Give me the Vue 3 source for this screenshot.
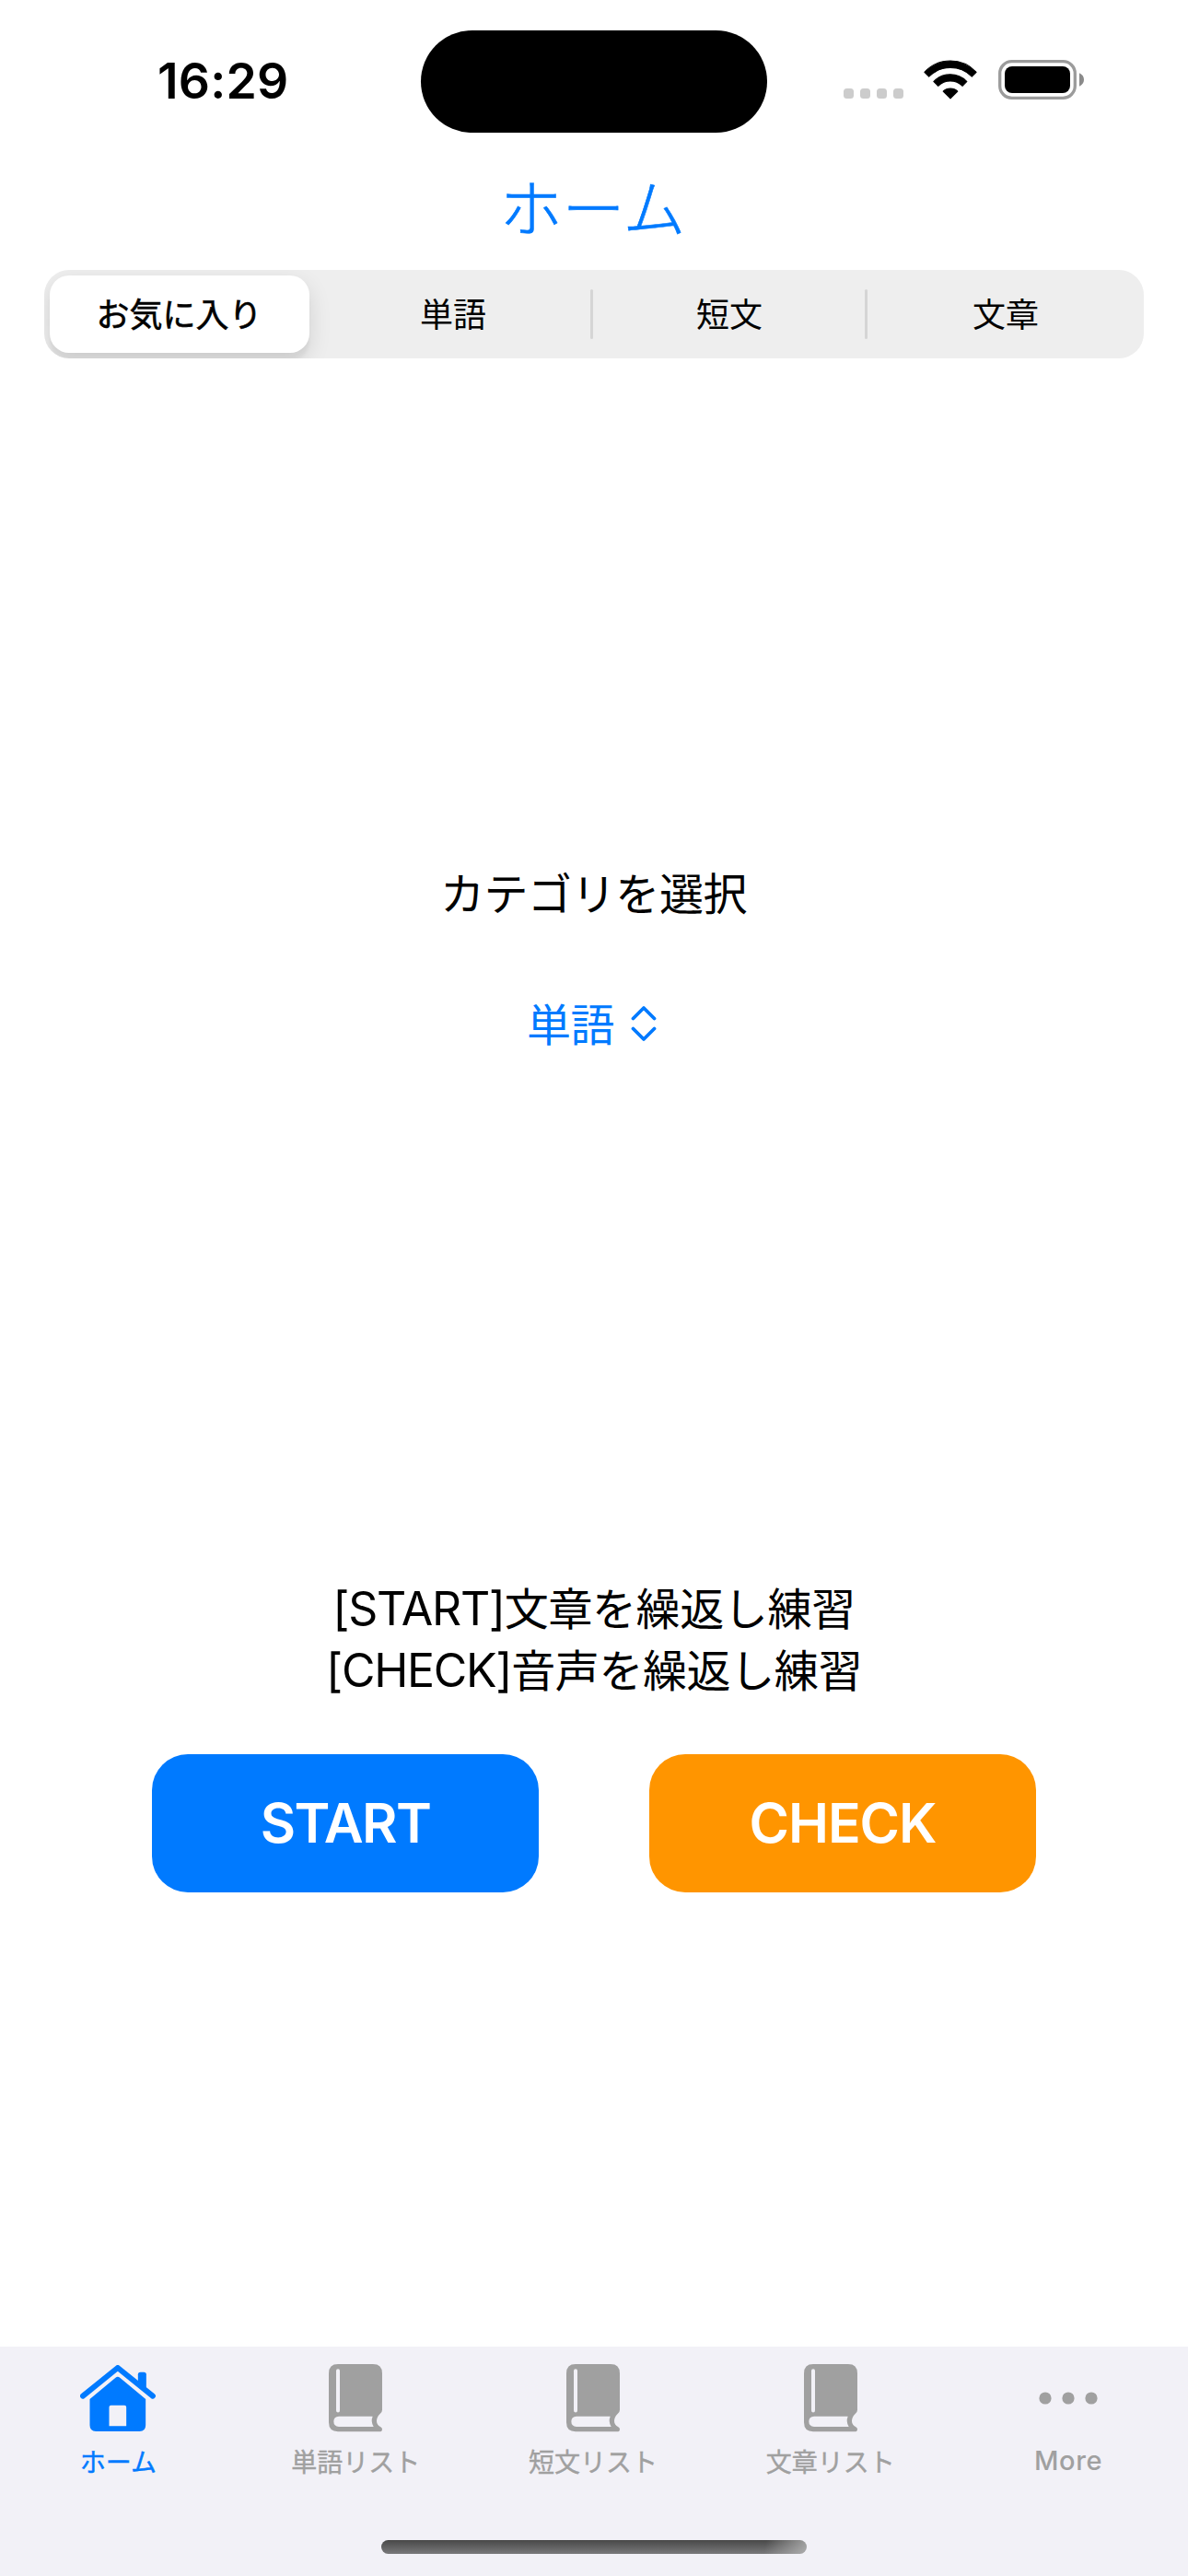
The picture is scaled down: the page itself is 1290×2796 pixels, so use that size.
<script setup>
import { ref } from 'vue'

const segments = ['お気に入り', '単語', '短文', '文章']
const selected = ref(0)
const tabs = [
  { label: 'ホーム', icon: 'home' },
  { label: '単語リスト', icon: 'book' },
  { label: '短文リスト', icon: 'book' },
  { label: '文章リスト', icon: 'book' },
  { label: 'More', icon: 'more' },
]
const activeTab = ref(0)
</script>

<template>
  <div class="screen">
    <header class="status">
      <span class="time">16:29</span>
      <div class="island"></div>
      <div class="indicators">
        <div class="signal"><i v-for="n in 4" :key="n"></i></div>
        <svg class="wifi" viewBox="491 134 173 128">
          <g fill="#000" stroke="#000" stroke-width="3" stroke-linejoin="round">
            <path d="M493.500 173.500A115 115 0 0 1 661.500 173.500L647 188A99 99 0 0 0 508 188Z" />
            <path d="M523 204A75 75 0 0 1 631 204L616.500 218.500A57 57 0 0 0 538 218.500Z" />
            <path d="M554 235.500A34 34 0 0 1 601 235.500L577.500 259Z" />
          </g>
        </svg>
        <svg class="battery" viewBox="0 0 93 43">
          <rect x="1.700" y="1.700" width="81.600" height="39.600" rx="13" fill="none" stroke="#9b9b9b" stroke-width="3.300" />
          <rect x="7" y="7" width="71" height="29" rx="8" fill="#000" />
          <path d="M88 14.300C91.500 16 93 18.500 93 21.500S91.500 27 88 28.700Z" fill="#8a8a8a" />
        </svg>
      </div>
    </header>

    <h1 class="title">ホーム</h1>

    <nav class="segmented">
      <button
        v-for="(name, i) in segments"
        :key="name"
        class="segment"
        :class="{ selected: i === selected }"
        @click="selected = i"
      >{{ name }}</button>
    </nav>

    <main class="content">
      <p class="caption">カテゴリを選択</p>
      <button class="picker">
        <span>単語</span>
        <svg class="chevrons" viewBox="0 0 28 40">
          <path d="M2.500 14.500L14 3L25.500 14.500M2.500 25.500L14 37L25.500 25.500" fill="none" stroke="#007aff" stroke-width="3.800" stroke-linecap="round" stroke-linejoin="round" />
        </svg>
      </button>
      <div class="hints">
        <p><span class="latin">[START]</span>文章を繰返し練習</p>
        <p><span class="latin">[CHECK]</span>音声を繰返し練習</p>
      </div>
      <div class="actions">
        <button class="action start">START</button>
        <button class="action check">CHECK</button>
      </div>
    </main>

    <footer class="tabbar">
      <div class="tabs">
        <button
          v-for="(tab, i) in tabs"
          :key="tab.label"
          class="tab"
          :class="{ active: i === activeTab }"
          @click="activeTab = i"
        >
          <span class="glyph">
            <svg v-if="tab.icon === 'home'" width="82" height="72" viewBox="260.500 141 246 216">
              <path d="M269.500 242L383 150L497 242" fill="none" stroke="currentColor" stroke-width="18" stroke-linecap="round" stroke-linejoin="round" />
              <path d="M449 205V172Q449 164 457 164H468Q476 164 476 172V225Z" fill="currentColor" />
              <path fill="currentColor" fill-rule="evenodd" d="M376 182Q383 176 390 182L474 252V337Q474 357 454 357H312Q292 357 292 337V252ZM361 272Q355 272 355 278V340H411V278Q411 272 405 272Z" />
            </svg>
            <svg v-else-if="tab.icon === 'book'" width="58" height="73.300" viewBox="1071 140 174 220">
              <path fill="currentColor" fill-rule="evenodd" d="M1101 140H1215Q1245 140 1245 170V289Q1245 297 1238 302Q1227 313 1227 325Q1227 337 1240 345Q1245 348 1245 352Q1245 360 1236 360H1101Q1071 360 1071 330V170Q1071 140 1101 140ZM1101 155.500Q1095 155.500 1095 162V291Q1095 297.500 1101 297.500Q1107 297.500 1107 291V162Q1107 155.500 1101 155.500ZM1104 310Q1087 311 1087 327Q1087 343 1104 344H1217Q1207 327 1214 310Z" />
            </svg>
            <svg v-else width="64" height="14" viewBox="0 0 64 14">
              <circle v-for="n in 3" :key="n" :cx="7 + (n - 1) * 25" cy="7" r="6.600" fill="currentColor" />
            </svg>
          </span>
          <span class="label" :class="{ roman: tab.icon === 'more' }">{{ tab.label }}</span>
        </button>
      </div>
      <div class="home-indicator"></div>
    </footer>
  </div>
</template>

<style>
body {
  background: #fff;
}
</style>

<style scoped>
.screen {
  width: 1290px;
  height: 2796px;
  display: flex;
  flex-direction: column;
  background: #fff;
  color: #000;
  overflow: hidden;
  font-family: "Noto Sans CJK JP", sans-serif;
}
button {
  border: 0;
  padding: 0;
  background: none;
  font: inherit;
  color: inherit;
}
p,
h1 {
  margin: 0;
}
.status {
  flex: none;
  height: 178px;
  display: grid;
  grid-template-columns: 457px 376px 1fr;
  align-items: start;
}
.time {
  margin: 56px 0 0 171px;
  font: 600 53.5px/64px Inter, sans-serif;
  letter-spacing: 0.2px;
}
.island {
  margin-top: 33px;
  height: 111px;
  border-radius: 56px;
  background: #000;
}
.indicators {
  display: flex;
  align-items: flex-end;
  margin: 65px 0 0 83px;
}
.signal {
  display: flex;
  gap: 7px;
  margin-bottom: 1px;
}
.signal i {
  width: 11px;
  height: 11px;
  border-radius: 3.5px;
  background: #ccc;
}
.wifi {
  width: 58px;
  height: 43px;
  margin-left: 22px;
}
.battery {
  width: 93px;
  height: 43px;
  margin-left: 23px;
}
.title {
  flex: none;
  padding-right: 3px;
  font-size: 68px;
  line-height: 90px;
  font-weight: 300;
  -webkit-text-stroke: 0.6px #007aff;
  text-align: center;
  color: #007aff;
}
.segmented {
  flex: none;
  display: grid;
  grid-template-columns: 294px repeat(3, 1fr);
  height: 96px;
  margin: 25px 48px 0;
  border-radius: 27px;
  background: #eee;
  overflow: hidden;
}
.segment {
  position: relative;
  padding-bottom: 4px;
  font-size: 36px;
  line-height: 80px;
}
.segment:nth-child(n + 3)::before {
  content: "";
  position: absolute;
  left: -1px;
  top: 21px;
  width: 3px;
  height: 54px;
  border-radius: 2px;
  background: #d5d5d5;
}
.segment:nth-child(4)::before {
  left: -3px;
}
.segment.selected {
  margin: 6px;
  padding-right: 1px;
  border-radius: 21px;
  background: #fff;
  -webkit-text-stroke: 0.6px #000;
  box-shadow: 0 9px 24px rgba(0, 0, 0, 0.12), 0 9px 3px rgba(0, 0, 0, 0.04);
}
.content {
  flex: 1;
  display: flex;
  flex-direction: column;
  align-items: center;
  font-size: 48px;
}
.caption {
  margin: 548px 1px 0 0;
  line-height: 60px;
  letter-spacing: -0.4px;
}
.picker {
  display: flex;
  align-items: center;
  gap: 18px;
  margin: 82px 5px 0 0;
  line-height: 60px;
  letter-spacing: -0.4px;
  color: #007aff;
}
.chevrons {
  width: 28px;
  height: 40px;
  margin-top: 4px;
}
.hints {
  margin-top: 571px;
  line-height: 67px;
  letter-spacing: -0.4px;
  text-align: center;
}
.latin {
  font-family: Inter, sans-serif;
  font-size: 50px;
  line-height: 0;
  letter-spacing: -1.3px;
}
.actions {
  display: flex;
  gap: 120px;
  margin-top: 60px;
}
.action {
  width: 420px;
  height: 150px;
  border-radius: 39px;
  color: #fff;
  font: 600 59px/150px Inter, sans-serif;
  letter-spacing: -1px;
}
.start {
  background: #007aff;
  letter-spacing: -1.6px;
}
.check {
  background: #ff9500;
}
.tabbar {
  flex: none;
  height: 249px;
  background: #f2f1f7;
  display: flex;
  flex-direction: column;
  align-items: center;
}
.tabs {
  align-self: flex-start;
  width: 1289px;
  display: grid;
  grid-template-columns: repeat(5, 1fr);
}
.tab {
  display: flex;
  flex-direction: column;
  align-items: center;
  color: #a0a0a0;
}
.tab.active {
  color: #007aff;
}
.glyph {
  height: 74px;
  margin: 19px 1px 0 0;
  display: flex;
  align-items: center;
}
.label {
  margin: 11px 1px 0 0;
  font-size: 28px;
  font-weight: 400;
  line-height: 40px;
  -webkit-text-stroke: 0.4px currentColor;
}
.roman {
  margin-right: 0;
  font-family: Inter, sans-serif;
  font-size: 29px;
  font-weight: 500;
  letter-spacing: 0.6px;
  -webkit-text-stroke: 0;
}
.home-indicator {
  width: 462px;
  height: 15px;
  margin-top: 66px;
  border-radius: 8px;
  background:
    linear-gradient(100deg, transparent 90%, rgba(190, 190, 190, 0.75) 100%),
    linear-gradient(#484848, #79797b);
}
</style>
